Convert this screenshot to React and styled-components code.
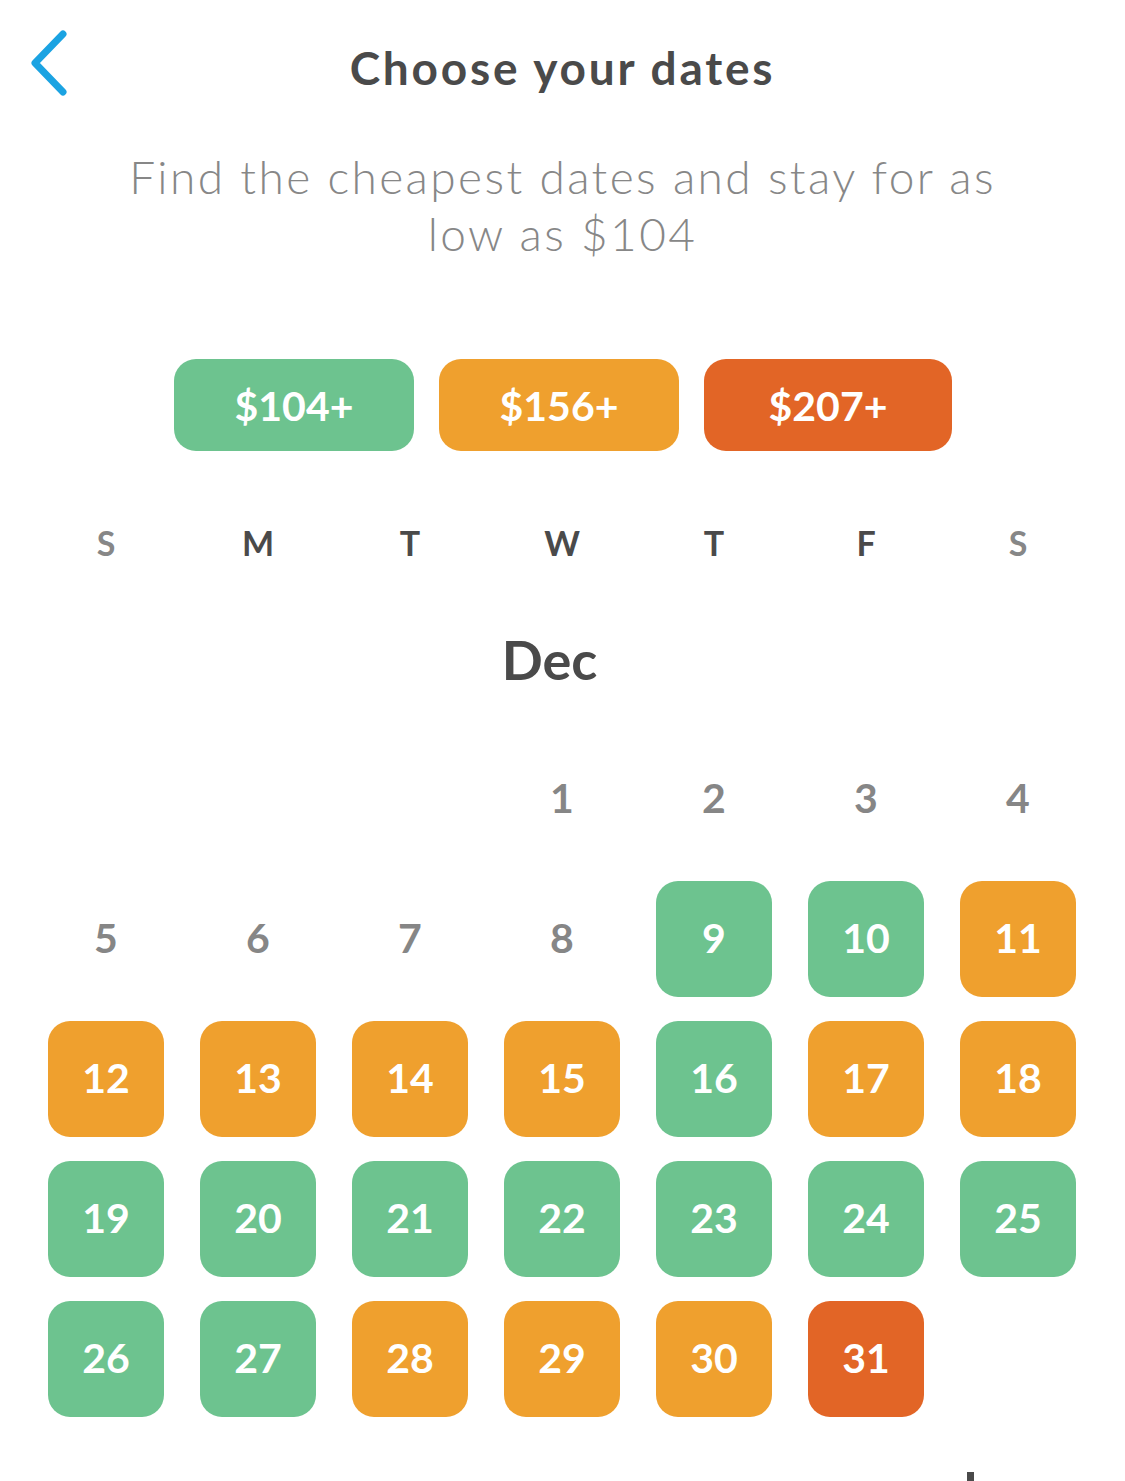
import React from 'react';
import styled, { createGlobalStyle } from 'styled-components';

const GlobalStyle = createGlobalStyle`
    html, body {
        margin: 0;
        padding: 0;
        background: #ffffff;
    }
    body {
        font-family: Lato, "Open Sans", sans-serif;
        -webkit-font-smoothing: antialiased;
    }
`;

const colors = {
    green: "#6dc38f",
    orange: "#efa02e",
    red: "#e26526",
};

const Page = styled.div`
    position: relative;
    width: 1125px;
    height: 1481px;
    overflow: hidden;
    background: #fff;
`;

const Header = styled.div`
    position: relative;
    height: 136px;
    display: flex;
    align-items: center;
    justify-content: center;
`;

const BackButton = styled.button`
    position: absolute;
    left: 24px;
    top: 24px;
    width: 52px;
    height: 78px;
    padding: 0;
    border: none;
    background: transparent;
    display: flex;
    align-items: center;
    justify-content: center;
    cursor: pointer;
`;

const Title = styled.h1`
    margin: 0 0 2px;
    font-size: 46px;
    font-weight: 700;
    color: #4a4a4a;
    letter-spacing: 2.8px;
`;

const Subtitle = styled.p`
    margin: 12px auto 0;
    width: 920px;
    text-align: center;
    font-size: 46px;
    font-weight: 300;
    line-height: 57px;
    color: #878787;
    letter-spacing: 2.4px;
`;

const PriceRow = styled.div`
    display: flex;
    justify-content: center;
    gap: 25px;
    margin-top: 97px;
    padding-left: 1px;
`;

const PricePill = styled.div`
    width: ${(props) => props.w}px;
    height: 92px;
    border-radius: 22px;
    background: ${(props) => colors[props.tone]};
    color: #fff;
    display: flex;
    align-items: center;
    justify-content: center;
    font-size: 41px;
    font-weight: 700;
`;

const Grid = styled.div`
    display: grid;
    grid-template-columns: repeat(7, 116px);
    column-gap: 36px;
    padding: 0 48px;
`;

const WeekRow = styled(Grid)`
    margin-top: 66px;
    height: 50px;
    align-items: center;
`;

const WeekDay = styled.div`
    text-align: center;
    font-size: 34px;
    font-weight: 700;
    color: ${(props) => (props.weekend ? "#878787" : "#4a4a4a")};
`;

const Month = styled.h2`
    margin: 68px 0 0;
    padding-right: 26px;
    text-align: center;
    font-size: 54px;
    font-weight: 700;
    color: #4a4a4a;
    line-height: 50px;
`;

const Days = styled(Grid)`
    margin-top: 56px;
    grid-auto-rows: 116px;
    row-gap: 24px;
`;

const Day = styled.div`
    border-radius: 22px;
    background: ${(props) => (props.tone ? colors[props.tone] : "transparent")};
    color: ${(props) => (props.tone ? "#fff" : "#868686")};
    display: flex;
    align-items: center;
    justify-content: center;
    padding-bottom: 3px;
    font-size: 41px;
    font-weight: 700;
`;

const ScrollThumb = styled.div`
    position: absolute;
    left: 967px;
    top: 1472px;
    width: 7px;
    height: 20px;
    background: #4a4a4a;
`;

const prices = [
    { label: "$104+", tone: "green", w: 240 },
    { label: "$156+", tone: "orange", w: 240 },
    { label: "$207+", tone: "red", w: 248 },
];

const weekDays = ["S", "M", "T", "W", "T", "F", "S"];

const tones = {
    9: "green", 10: "green", 11: "orange",
    12: "orange", 13: "orange", 14: "orange", 15: "orange", 16: "green", 17: "orange", 18: "orange",
    19: "green", 20: "green", 21: "green", 22: "green", 23: "green", 24: "green", 25: "green",
    26: "green", 27: "green", 28: "orange", 29: "orange", 30: "orange", 31: "red",
};

const App = () => {
    const cells = [];
    for (let i = 0; i < 3; i++) cells.push(null);
    for (let d = 1; d <= 31; d++) cells.push(d);

    return (
        <Page>
            <GlobalStyle />
            <Header>
                <BackButton aria-label="Back">
                    <svg width="52" height="78" viewBox="0 0 52 78">
                        <path d="M39 10 L11 39 L39 68" fill="none" stroke="#1ba3e2" strokeWidth="7" strokeLinecap="round" strokeLinejoin="round" />
                    </svg>
                </BackButton>
                <Title>Choose your dates</Title>
            </Header>
            <Subtitle>Find the cheapest dates and stay for as low as $104</Subtitle>
            <PriceRow>
                {prices.map((p) => (
                    <PricePill key={p.label} tone={p.tone} w={p.w}>{p.label}</PricePill>
                ))}
            </PriceRow>
            <WeekRow>
                {weekDays.map((d, i) => (
                    <WeekDay key={i} weekend={i === 0 || i === 6}>{d}</WeekDay>
                ))}
            </WeekRow>
            <Month>Dec</Month>
            <Days>
                {cells.map((d, i) => (
                    d === null
                        ? <div key={i} />
                        : <Day key={i} tone={tones[d]}>{d}</Day>
                ))}
            </Days>
            <ScrollThumb />
        </Page>
    );
};

export default App;
